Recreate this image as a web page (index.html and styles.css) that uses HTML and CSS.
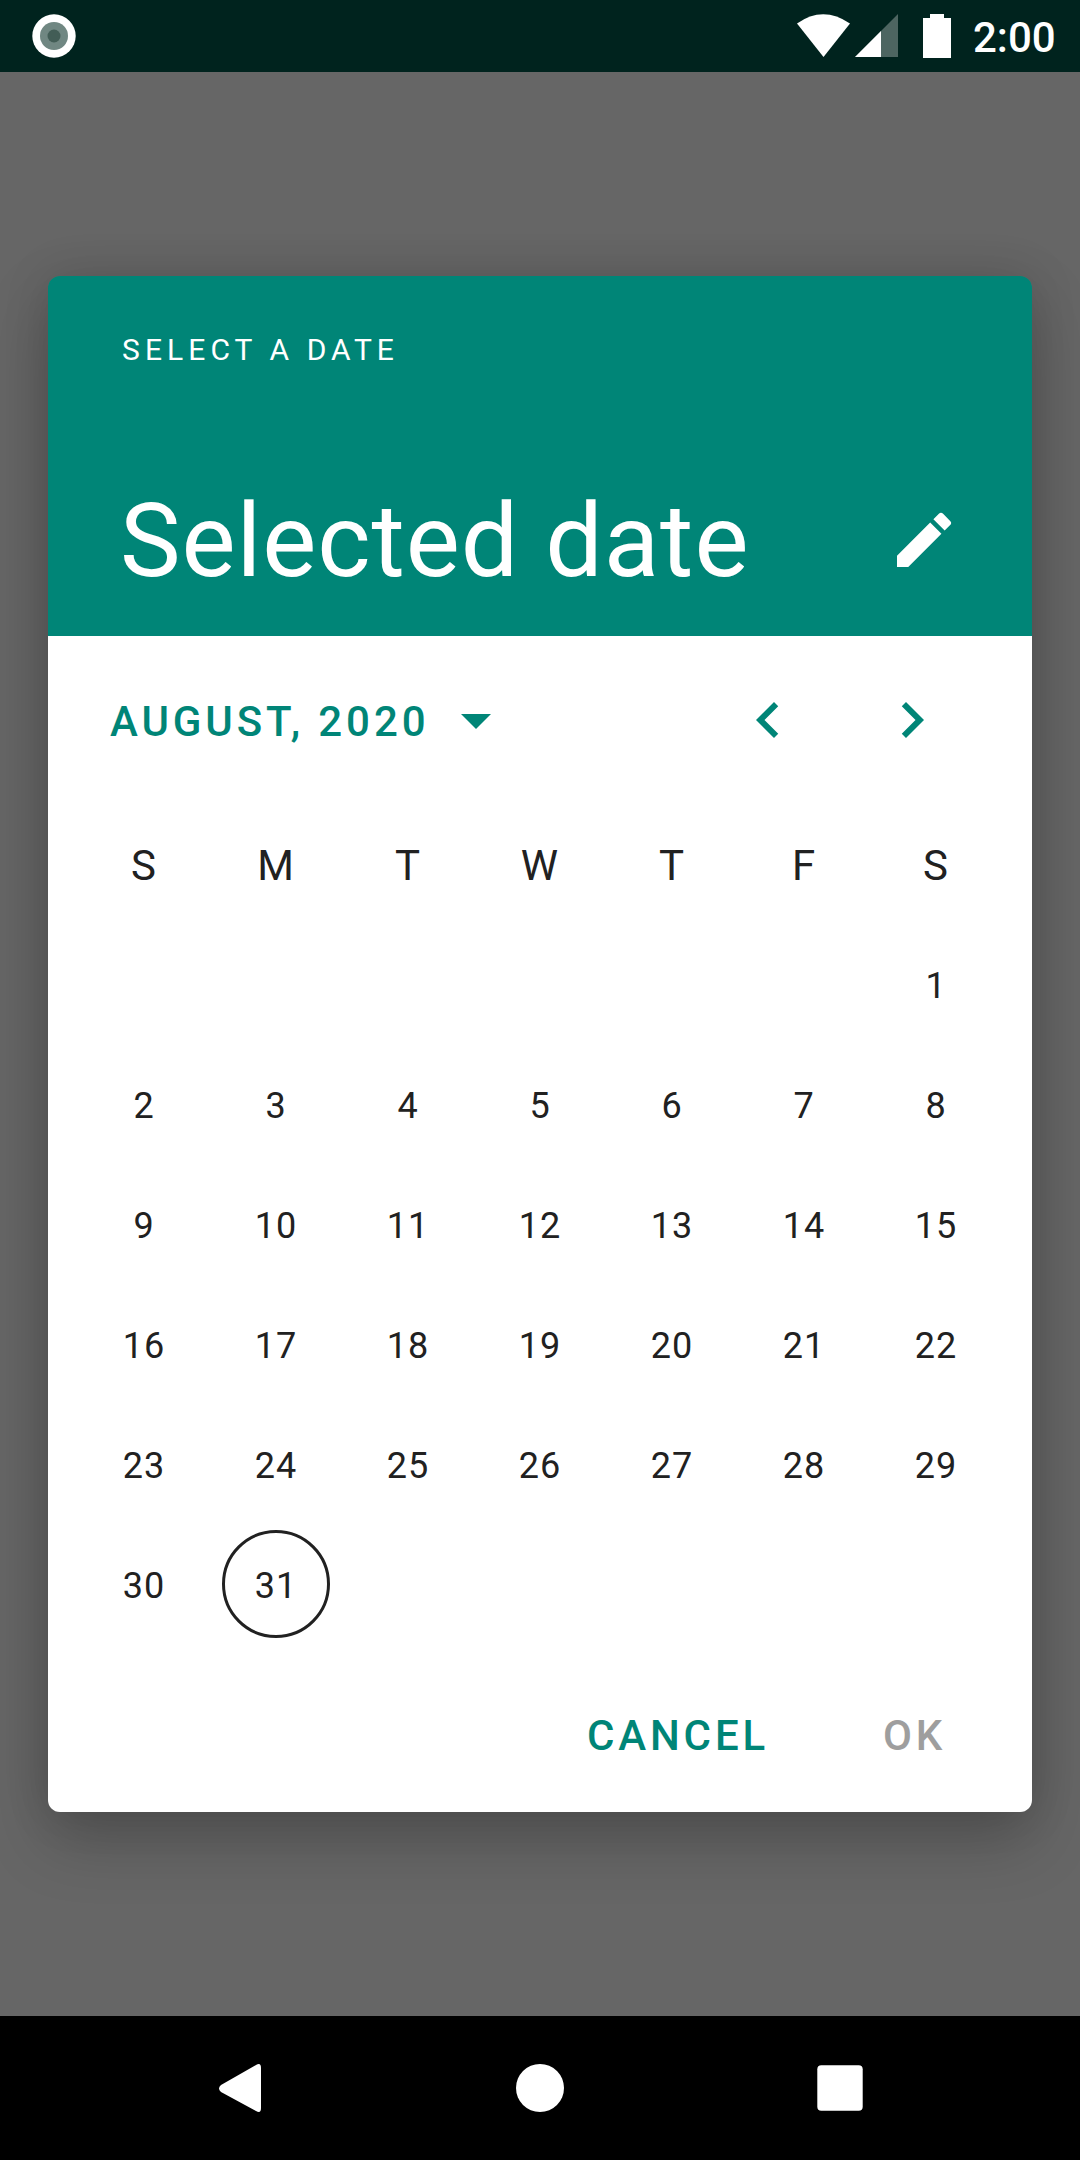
FILE: index.html
```html
<!DOCTYPE html>
<html lang="en">
<head>
<meta charset="utf-8">
<title>Select a date</title>
<link rel="stylesheet" href="styles.css">
</head>
<body>
<div class="screen">
  <header class="status">
    <svg class="record" width="44" height="44" viewBox="0 0 44 44"><circle cx="22" cy="22" r="21.700" fill="#fff"/><circle cx="22" cy="22" r="14" fill="#708782"/><circle cx="22" cy="22" r="6.500" fill="#425d56"/></svg>
    <svg class="indicators" width="160" height="72" viewBox="796 0 160 72"><path d="M797 23.500Q823 5 850 23.500L823.500 57Z" fill="#fff"/><path d="M898 14V57H855Z" fill="#4d6561"/><path d="M881 31V57H855Z" fill="#fff"/><path d="M930 14h14v4h7v40h-28V18h7Z" fill="#fff"/></svg>
    <span class="clock">2:00</span>
  </header>
  <main class="scrim">
    <section class="dialog">
      <div class="head">
        <div class="overline">SELECT A DATE</div>
        <div class="selection">
          <h1 class="title">Selected date</h1>
          <svg class="edit" width="72" height="72" viewBox="0 0 24 24"><path fill="#fff" d="M3 17.250V21h3.750L17.810 9.940l-3.750-3.750L3 17.250zM20.710 7.040a1 1 0 0 0 0-1.410l-2.340-2.340a1 1 0 0 0-1.410 0l-1.830 1.830 3.750 3.750 1.830-1.830z"/></svg>
        </div>
      </div>
      <div class="nav">
        <span class="month">AUGUST, 2020</span>
        <svg class="drop" width="72" height="72" viewBox="0 0 24 24"><path d="M7 10l5 5 5-5z"/></svg>
        <svg class="prev" width="72" height="72" viewBox="0 0 24 24"><path d="M15.410 7.410L14 6l-6 6 6 6 1.410-1.410L10.830 12z"/></svg>
        <svg class="next" width="72" height="72" viewBox="0 0 24 24"><path d="M10 6L8.590 7.410 13.170 12l-4.580 4.590L10 18l6-6z"/></svg>
      </div>
      <div class="week"><span>S</span><span>M</span><span>T</span><span>W</span><span>T</span><span>F</span><span>S</span></div>
      <div class="days">
        <span class="first">1</span><span>2</span><span>3</span><span>4</span><span>5</span><span>6</span><span>7</span><span>8</span><span>9</span><span>10</span><span>11</span><span>12</span><span>13</span><span>14</span><span>15</span><span>16</span><span>17</span><span>18</span><span>19</span><span>20</span><span>21</span><span>22</span><span>23</span><span>24</span><span>25</span><span>26</span><span>27</span><span>28</span><span>29</span><span>30</span><span class="today">31</span>
      </div>
      <div class="actions"><span class="cancel">CANCEL</span><span class="ok">OK</span></div>
    </section>
  </main>
  <footer class="system">
    <svg width="1080" height="144" viewBox="0 2016 1080 144" fill="#fff"><path d="M221 2085L256 2065Q261 2062 261 2068V2108Q261 2114 256 2111L221 2092Q217 2088.500 221 2085Z"/><circle cx="540" cy="2088" r="24"/><rect x="817.300" y="2065.300" width="45.400" height="45.400" rx="4"/></svg>
  </footer>
</div>
</body>
</html>
```
FILE: styles.css
```css
body { margin: 0; font-family: Roboto, sans-serif; }
.screen { width: 1080px; height: 2160px; display: flex; flex-direction: column; overflow: hidden; background: #666; color: #212121; }
svg { display: block; flex: none; }
.status { height: 72px; background: #00231e; display: flex; align-items: center; box-sizing: border-box; padding-left: 32px; flex: none; }
.indicators { margin-left: 720px; }
.clock { color: #fff; font-size: 42px; font-weight: 500; margin-left: 17px; line-height: 68px; padding-top: 4px; }
.scrim { flex: 1; background: #666; padding: 204px 48px 0; }
.dialog { height: 1536px; background: linear-gradient(#008577 360px, #fff 360px); border-radius: 12px; box-shadow: 0 28px 64px rgba(0,0,0,.22), 0 0 48px rgba(0,0,0,.12); display: flex; flex-direction: column; }
.head { height: 360px; box-sizing: border-box; color: #fff; padding: 56px 72px 0; flex: none; }
.overline { font-size: 30px; line-height: 36px; letter-spacing: 5.080px; padding-left: 2px; }
.selection { display: flex; justify-content: space-between; align-items: center; margin-top: 112px; }
.title { margin: 0 0 -2px; font-size: 102px; line-height: 122px; font-weight: 400; letter-spacing: .900px; }
.nav { height: 168px; display: flex; align-items: center; padding-left: 62px; color: #008577; fill: #008577; flex: none; }
.month { font-size: 42px; font-weight: 500; letter-spacing: 3.900px; width: 330px; white-space: nowrap; padding-top: 2px; }
.prev { margin-left: 220px; }
.next { margin-left: 72px; }
.week, .days { display: grid; grid-template-columns: repeat(7, 132px); margin-left: 30px; text-align: center; }
.week { height: 120px; font-size: 42px; line-height: 124px; letter-spacing: 1px; }
.days { grid-auto-rows: 120px; font-size: 36px; line-height: 124px; letter-spacing: .900px; }
.first { grid-column: 7; }
.today { width: 108px; height: 108px; margin: 6px 12px; box-sizing: border-box; border: 3px solid #212121; border-radius: 50%; line-height: 106px; }
.actions { display: flex; font-size: 42px; line-height: 50px; font-weight: 500; letter-spacing: 3.850px; padding-left: 539px; margin-top: 67px; }
.cancel { color: #008577; width: 296px; }
.ok { color: #9e9e9e; }
.system { height: 144px; background: #000; flex: none; }
```
